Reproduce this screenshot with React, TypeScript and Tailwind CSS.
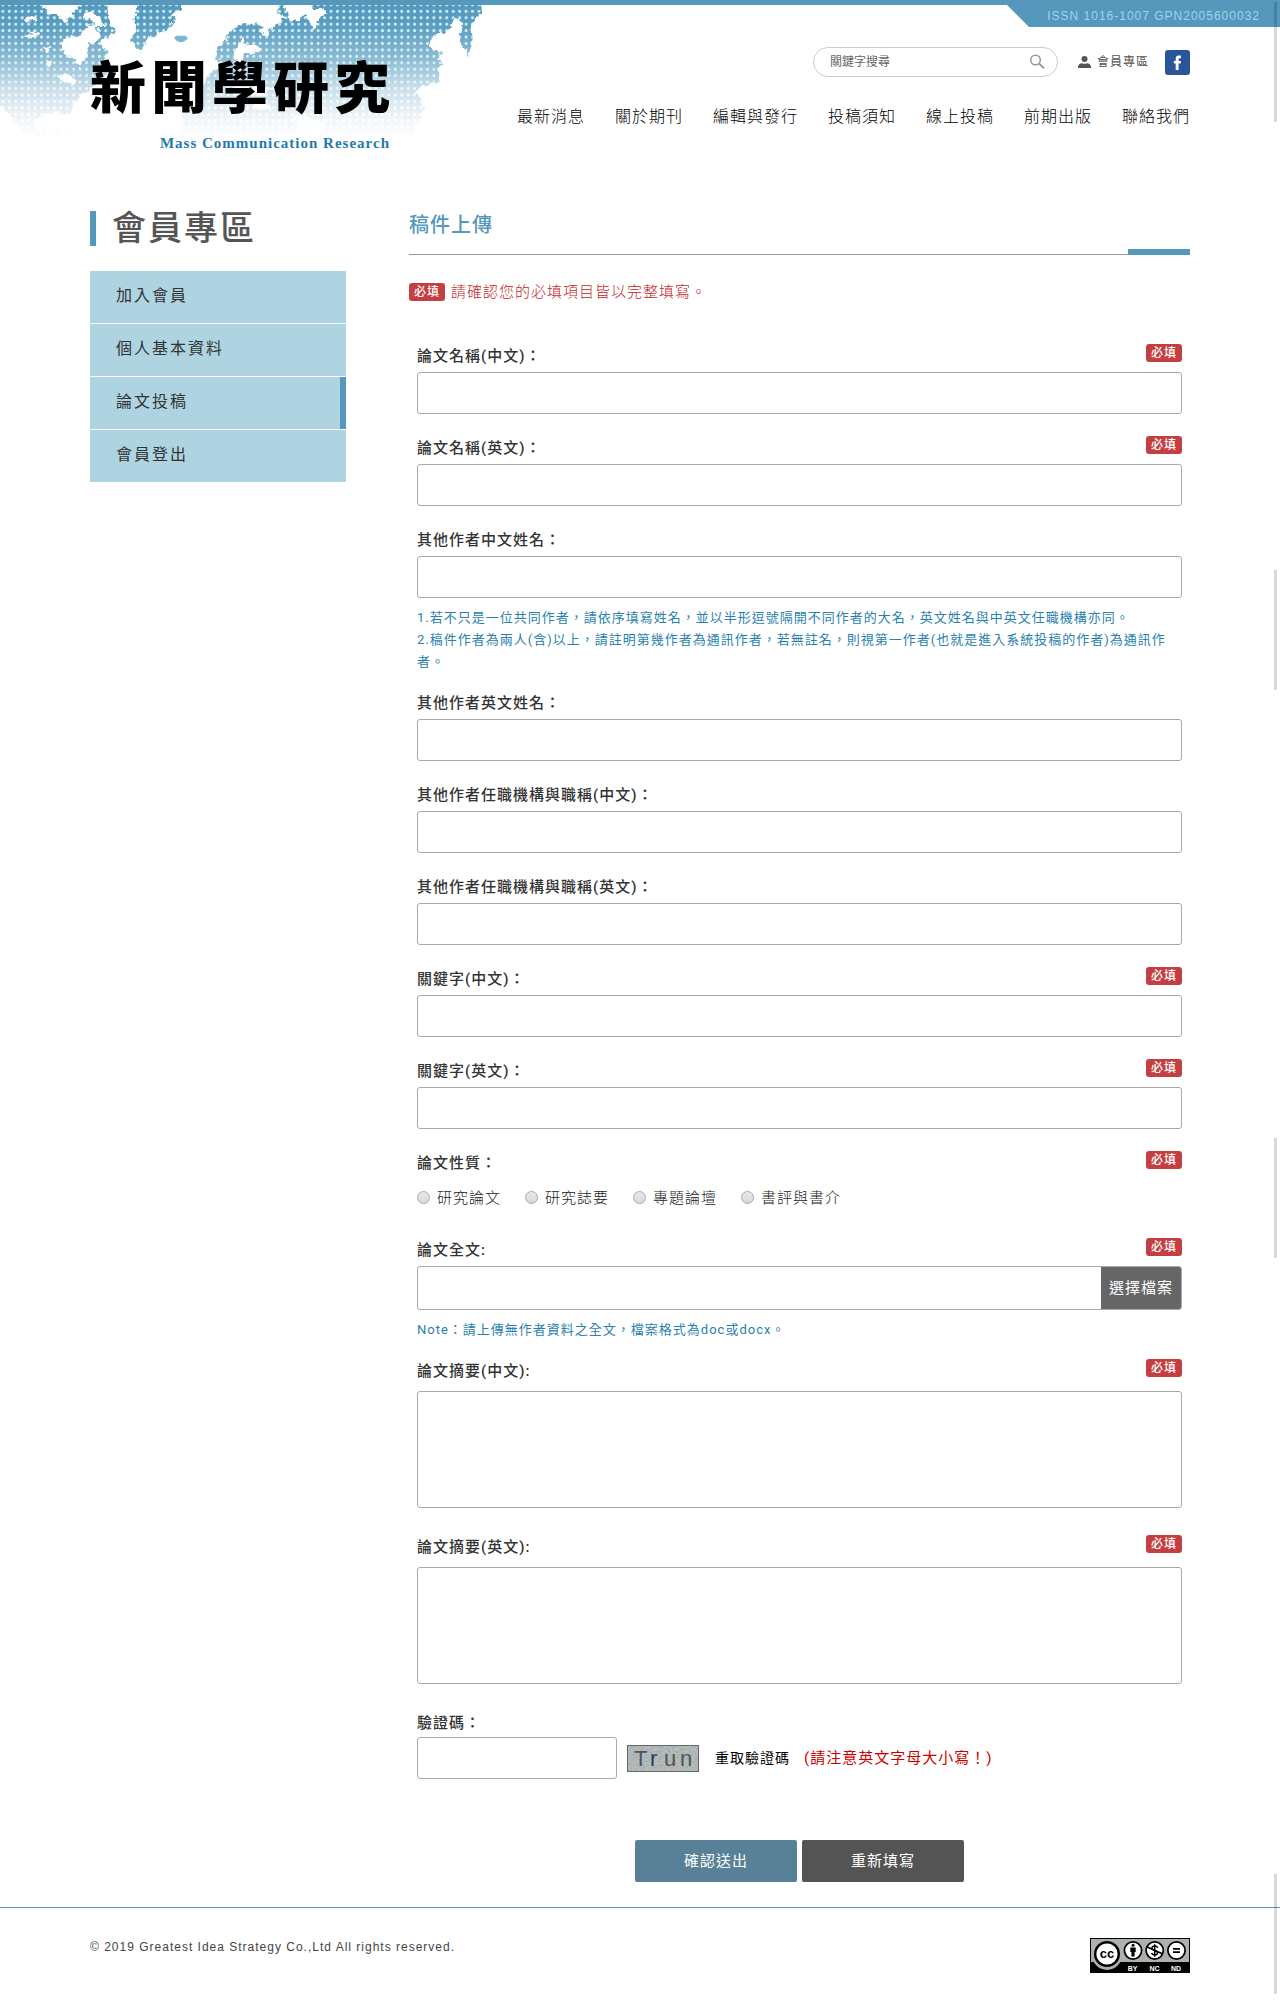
import type { ReactNode } from 'react'

const navItems = ['最新消息', '關於期刊', '編輯與發行', '投稿須知', '線上投稿', '前期出版', '聯絡我們']

const menuItems = [
  { label: '加入會員' },
  { label: '個人基本資料' },
  { label: '論文投稿', active: true },
  { label: '會員登出' },
]

const paperTypes = ['研究論文', '研究誌要', '專題論壇', '書評與書介']

const inputClass = 'block w-full h-[42px] px-3 border border-[#aaa] rounded-[3px] bg-white'

function WorldMap() {
  return (
    <svg className="absolute left-0 top-0 w-[500px] h-[170px]" viewBox="0 0 1500 510" aria-hidden>
      <defs>
        <linearGradient id="sea" x1="0" y1="0" x2="0" y2="1">
          <stop offset="0" stopColor="#5598bc" />
          <stop offset="0.18" stopColor="#5b9cbf" />
          <stop offset="0.42" stopColor="#8ebbd3" />
          <stop offset="0.62" stopColor="#c8dde9" />
          <stop offset="0.85" stopColor="#f0f6f9" />
          <stop offset="1" stopColor="#ffffff" />
        </linearGradient>
        <linearGradient id="fade" x1="0" y1="0" x2="0" y2="1">
          <stop offset="0" stopColor="#c4f1f5" />
          <stop offset="0.5" stopColor="#d6f3f7" />
          <stop offset="0.8" stopColor="#ffffff" />
        </linearGradient>
        <pattern id="dotMask" width="19.3" height="19.3" patternUnits="userSpaceOnUse" x="-1" y="5">
          <circle cx="9.6" cy="9.6" r="4.6" fill="#fff" />
        </pattern>
        <mask id="dots">
          <rect width="1500" height="420" fill="url(#dotMask)" />
        </mask>
        <filter id="coast" x="-5%" y="-5%" width="110%" height="110%" colorInterpolationFilters="sRGB">
          <feTurbulence type="fractalNoise" baseFrequency="0.05" numOctaves="3" seed="4" />
          <feDisplacementMap in="SourceGraphic" scale="28" xChannelSelector="R" yChannelSelector="G" />
        </filter>
      </defs>
      <rect width="1446" height="420" fill="url(#sea)" />
      <rect width="1446" height="420" fill="url(#fade)" mask="url(#dots)" />
      <g fill="#fff" filter="url(#coast)">
        <path d="M320 -20H410L408 40 400 60 408 90 396 110 400 135 425 152 440 120 470 100 500 92 525 60 505 50 545 25 540 -20H838L835 45 858 55 820 80 800 105 775 92 785 75 745 65 715 75 690 95 680 120 655 140 650 165 665 190 620 230 600 300 545 350 540 430H230L200 350 230 300 290 250 330 215 310 190 325 150 300 125 345 100 325 60Z" />
        <path d="M185 125 215 100 240 112 250 85 285 70 300 95 290 120 268 130 260 165 240 205 225 175 200 165 182 145Z" />
        <path d="M110 -10H245L238 35 212 32 225 52 190 62 170 42 150 50 138 32Z" />
        <path d="M262 30 300 50 318 85 290 75 270 62 250 60 255 45Z" />
        <path d="M845-20H925L945 35 972 18 982 40 955 50 945 95 930 65 915 40 895 68 865 55Z" />
        <path d="M712 132 735 112 730 140 765 130 785 150 760 162 732 158 722 195 700 178Z" />
        <path d="M1480 -20V420H1235L1275 300 1240 270 1316 245 1322 155 1285 145 1295 118 1320 98 1350 92 1355 68 1375 50 1385 82 1378 110 1385 140 1407 168 1418 120 1410 90 1422 65 1448 35V-20Z" />
        <path d="M70 55 105 46 110 58 80 66ZM78 102 120 92 115 104 85 112ZM135 145 150 140 148 158 138 158ZM138 180 152 176 150 200 140 200Z" />
        <path d="M168 225 200 222 230 240 215 262 190 240ZM105 350 150 338 240 345 240 400 110 390ZM0 315 70 395 0 430Z" />
        <path d="M700 260 830 262 780 290 700 280ZM770 300 812 310 808 332 760 325ZM880 345 930 355 980 375 960 410 900 400Z" />
      </g>
      <path d="M522 112Q532 104 540 108Q556 104 564 114Q556 126 542 127Q528 126 522 112Z" fill="#7fb6d0" />
      <path d="M1338 215 1366 225 1364 270 1352 300 1316 318 1330 285 1350 255Z" fill="#fff" opacity="0.7" />
    </svg>
  )
}

function CcBadge() {
  return (
    <svg className="w-[100px] h-[35px]" viewBox="0 0 100 35" role="img" aria-label="Creative Commons BY-NC-ND">
      <rect width="100" height="35" fill="#000" />
      <rect x="1" y="1" width="98" height="23" fill="#aab2ab" />
      <circle cx="17" cy="17" r="15" fill="#aab2ab" />
      <circle cx="17" cy="16" r="11.8" fill="#fff" stroke="#000" strokeWidth="2.4" />
      <text x="17" y="20" textAnchor="middle" fontSize="13" fontWeight="700" letterSpacing="0" fontFamily="Liberation Sans, sans-serif">cc</text>
      <g fill="#fff" stroke="#000" strokeWidth="1.7">
        <circle cx="43" cy="12.5" r="8.6" />
        <circle cx="64.7" cy="12.5" r="8.6" />
        <circle cx="86.5" cy="12.5" r="8.6" />
      </g>
      <circle cx="43" cy="7.3" r="1.5" />
      <path d="M40.3 9.4H45.7V14H44.6V18.6H41.4V14H40.3Z" />
      <path d="M67.8 9.7Q67 8 64.7 8Q62 8 62 10.1Q62 11.9 64.7 12.4Q67.5 13 67.5 15Q67.5 17 64.7 17Q62.2 17 61.5 15.1M64.7 6.3V18.7" fill="none" stroke="#000" strokeWidth="1.5" />
      <path d="M57.2 9 72.4 15.7" stroke="#000" strokeWidth="1.5" />
      <path d="M83 10.8H90M83 14.2H90" stroke="#000" strokeWidth="1.8" />
      <g fill="#fff" fontSize="7" fontWeight="700" letterSpacing="0" textAnchor="middle" fontFamily="Liberation Sans, sans-serif">
        <text x="42.5" y="32.5">BY</text>
        <text x="64.5" y="32.5">NC</text>
        <text x="86" y="32.5">ND</text>
      </g>
    </svg>
  )
}

function Required() {
  return (
    <span className="inline-flex items-center justify-center shrink-0 w-9 h-[18px] rounded-[3px] bg-[#c43f42] text-white text-xs font-medium leading-[18px]">
      必填
    </span>
  )
}

type FieldProps = {
  id: string
  label: string
  required?: boolean
  className?: string
  headClass?: string
  children: ReactNode
}

function Field({ id, label, required, className = 'pb-[18px]', headClass = 'h-8', children }: FieldProps) {
  return (
    <div className={className}>
      <div className={`flex items-start justify-between ${headClass}`}>
        <label htmlFor={id} className="text-[15px] leading-8 font-medium text-[#333]">{label}</label>
        {required && <div className="flex pt-1"><Required /></div>}
      </div>
      {children}
    </div>
  )
}

function TextField({ id, label, required }: { id: string; label: string; required?: boolean }) {
  return (
    <Field id={id} label={label} required={required}>
      <input id={id} type="text" className={inputClass} />
    </Field>
  )
}

function Header() {
  return (
    <header className="relative h-[170px] border-t-[5px] border-[#5598bc]">
      <div className="absolute inset-x-0 -top-[5px] h-[170px] overflow-hidden">
        <WorldMap />
        <div className="absolute inset-x-0 top-0 h-[5px] bg-[#5598bc]" />
      </div>
      <div className="absolute right-0 -top-[5px] w-[273px] h-[27px] pr-5 bg-[#5598bc] text-right font-['Liberation_Sans',sans-serif] text-xs leading-8 text-[#9ed3e8] [clip-path:polygon(0_5px,22px_100%,100%_100%,100%_0,0_0)]">
        ISSN 1016-1007 GPN2005600032
      </div>

      <div className="relative max-w-[1100px] mx-auto flex justify-between">
        <a href="#" className="flex flex-col w-[300px] pt-10">
          <span className="flex justify-between h-[88px] text-[56px] leading-[88px] font-black text-black tracking-normal">
            <span>新</span>
            <span>聞</span>
            <span>學</span>
            <span>研</span>
            <span>究</span>
          </span>
          <span className="self-end font-['Liberation_Serif',serif] text-[15px] leading-5 font-bold text-[#1f7aad]">
            Mass Communication Research
          </span>
        </a>

        <div className="flex flex-col items-end pt-[42px]">
          <div className="flex items-center">
            <form className="flex items-center w-[245px] h-[30px] pl-4 pr-3 border border-[#ccc] rounded-full bg-white">
              <input
                type="search"
                aria-label="關鍵字搜尋"
                placeholder="關鍵字搜尋"
                className="flex-1 min-w-0 text-xs tracking-normal bg-transparent outline-none placeholder:text-[#666]"
              />
              <button type="button" aria-label="搜尋">
                <svg width="16" height="16" viewBox="0 0 16 16" fill="none" stroke="#999">
                  <circle cx="6.5" cy="6" r="4.8" strokeWidth="1.5" />
                  <path d="M10.2 9.6 15 14.4" strokeWidth="2" />
                </svg>
              </button>
            </form>
            <a href="#" className="flex items-center gap-1.5 ml-5 text-xs text-[#555]">
              <svg width="13" height="12" viewBox="0 0 13 12" fill="#555" aria-hidden>
                <circle cx="6.5" cy="3" r="3" />
                <path d="M0 12V10.5Q0.5 7.5 4 7.2Q6.5 8.4 9 7.2Q12.5 7.5 13 10.5V12Z" />
              </svg>
              會員專區
            </a>
            <a href="#" aria-label="Facebook" className="ml-4">
              <svg width="25" height="25" viewBox="0 0 25 25">
                <rect width="25" height="25" rx="3" fill="#2a5699" />
                <path d="M16 5.5V8.3H14.3Q13.6 8.3 13.6 9.2V11H16L15.7 13.6H13.6V20H10.7V13.6H8.9V11H10.7V8.9Q10.7 5.5 13.8 5.5Z" fill="#fff" />
              </svg>
            </a>
          </div>
          <nav className="flex gap-[30px] mt-7 text-base leading-6 font-light text-black">
            {navItems.map((item) => (
              <a key={item} href="#">{item}</a>
            ))}
          </nav>
        </div>
      </div>
    </header>
  )
}

function Sidebar() {
  return (
    <aside className="w-64 shrink-0">
      <h1 className="mt-[41px] h-[35px] pl-4 border-l-[6px] border-[#5598bc] text-[34px] leading-[34px] font-medium text-[#555] tracking-[2px]">
        會員專區
      </h1>
      <ul className="mt-[25px] flex flex-col gap-px text-base tracking-[2px] text-[#333]">
        {menuItems.map((item) => (
          <li key={item.label}>
            <a
              href="#"
              className={`block h-[52px] pl-[26px] leading-[50px] bg-[#aed3e1] ${item.active ? 'border-r-[6px] border-[#5598bc]' : ''}`}
            >
              {item.label}
            </a>
          </li>
        ))}
      </ul>
    </aside>
  )
}

function UploadForm() {
  return (
    <form className="px-2 pt-9">
      <TextField id="title-zh" label="論文名稱(中文)：" required />
      <TextField id="title-en" label="論文名稱(英文)：" required />
      <Field id="authors-zh" label="其他作者中文姓名：" className="pb-[14px]">
        <input id="authors-zh" type="text" className={inputClass} />
        <p className="mt-[9px] text-[13px] leading-[22px] text-[#2a7fae]">
          1.若不只是一位共同作者，請依序填寫姓名，並以半形逗號隔開不同作者的大名，英文姓名與中英文任職機構亦同。
          <br />
          2.稿件作者為兩人(含)以上，請註明第幾作者為通訊作者，若無註名，則視第一作者(也就是進入系統投稿的作者)為通訊作者。
        </p>
      </Field>
      <TextField id="authors-en" label="其他作者英文姓名：" />
      <TextField id="org-zh" label="其他作者任職機構與職稱(中文)：" />
      <TextField id="org-en" label="其他作者任職機構與職稱(英文)：" />
      <TextField id="keywords-zh" label="關鍵字(中文)：" required />
      <TextField id="keywords-en" label="關鍵字(英文)：" required />

      <Field id="type-0" label="論文性質：" required>
        <div className="flex gap-6 h-[37px] text-[15px] leading-9 font-light text-[#222]">
          {paperTypes.map((type, i) => (
            <label key={type} className="flex items-center gap-[7px]">
              <input
                id={`type-${i}`}
                type="radio"
                name="type"
                className="appearance-none size-[13px] border border-[#aaa] rounded-full bg-linear-to-b from-[#e8e8e8] to-[#d8d8d8]"
              />
              {type}
            </label>
          ))}
        </div>
      </Field>

      <Field id="paper" label="論文全文:" required className="pb-[14px]">
        <div className="flex h-11 border border-[#aaa] rounded-[3px] overflow-hidden">
          <input id="paper" type="text" className="flex-1 min-w-0 px-3" />
          <button type="button" className="w-20 bg-[#666] text-white text-[15px]">選擇檔案</button>
        </div>
        <p className="mt-[9px] text-[13px] leading-[22px] text-[#2a7fae]">
          Note：請上傳無作者資料之全文，檔案格式為doc或docx。
        </p>
      </Field>

      <Field id="abstract-zh" label="論文摘要(中文):" required className="pb-[23px]" headClass="h-9">
        <textarea id="abstract-zh" className="block w-full h-[117px] p-3 border border-[#aaa] rounded-[3px] resize-none" />
      </Field>
      <Field id="abstract-en" label="論文摘要(英文):" required className="pb-[23px]" headClass="h-9">
        <textarea id="abstract-en" className="block w-full h-[117px] p-3 border border-[#aaa] rounded-[3px] resize-none" />
      </Field>

      <Field id="captcha" label="驗證碼：" className="" headClass="h-[30px]">
        <div className="flex items-center">
          <input id="captcha" type="text" className="w-[200px] h-[42px] px-3 border border-[#aaa] rounded-[3px]" />
          <svg className="ml-2.5 w-[72px] h-[27px]" viewBox="0 0 72 27" role="img" aria-label="驗證碼圖片">
            <filter id="grain" colorInterpolationFilters="sRGB">
              <feTurbulence type="fractalNoise" baseFrequency="0.5" numOctaves="2" />
              <feColorMatrix values="0.3 0 0 0 0.53  0 0.3 0 0 0.57  0 0 0.3 0 0.57  0 0 0 0 1" />
            </filter>
            <rect width="72" height="27" filter="url(#grain)" />
            <rect x="0.5" y="0.5" width="71" height="26" fill="none" stroke="#666" />
            <g fontSize="22" letterSpacing="0" fontFamily="Liberation Sans, sans-serif" fill="#555">
              <text x="7" y="21">T</text>
              <text x="23" y="21" fill="#23405a">r</text>
              <text x="37" y="21" fill="#5d5040">u</text>
              <text x="53" y="21">n</text>
            </g>
          </svg>
          <a href="#" className="ml-4 text-sm text-black">重取驗證碼</a>
          <span className="ml-3.5 text-[15px] text-[#c00]">(請注意英文字母大小寫！)</span>
        </div>
      </Field>

      <div className="flex justify-center gap-[5px] mt-[61px] text-[15px] text-white">
        <button type="submit" className="w-[162px] h-[42px] rounded-xs bg-[#588197]">確認送出</button>
        <button type="reset" className="w-[162px] h-[42px] rounded-xs bg-[#545454]">重新填寫</button>
      </div>
    </form>
  )
}

export default function App() {
  return (
    <div className="relative bg-white font-[Roboto,'Noto_Sans_CJK_TC',sans-serif] tracking-[1px]">
      <Header />

      <div className="max-w-[1100px] mx-auto flex gap-[63px]">
        <Sidebar />
        <main className="flex-1 min-w-0">
          <div className="flex items-end justify-between h-[85px] border-b border-[#999]">
            <h2 className="pb-[15px] text-xl leading-7 font-medium text-[#5598bc]">稿件上傳</h2>
            <span className="w-[62px] h-1.5 -mb-px bg-[#5598bc]" />
          </div>
          <p className="flex items-center gap-1.5 mt-[25px] h-6 text-[15px] leading-6 font-light text-[#c0282b]">
            <Required />
            請確認您的必填項目皆以完整填寫。
          </p>
          <UploadForm />
        </main>
      </div>

      <footer className="mt-[25px] border-t border-[#5598bc]">
        <div className="max-w-[1100px] mx-auto flex items-start justify-between pt-[30px] pb-[30px]">
          <p className="font-['Liberation_Sans',sans-serif] text-xs leading-[18px] text-[#444]">
            © 2019 Greatest Idea Strategy Co.,Ltd All rights reserved.
          </p>
          <a href="#"><CcBadge /></a>
        </div>
      </footer>

      {/* grey strips along the right edge */}
      <div className="absolute right-[3px] top-[2px] w-[3px] h-[120px] bg-black/15" />
      <div className="absolute right-[3px] top-[570px] w-[3px] h-[120px] bg-black/15" />
      <div className="absolute right-[3px] top-[1138px] w-[3px] h-[120px] bg-black/15" />
      <div className="absolute right-[3px] top-[1874px] w-[3px] h-[120px] bg-black/15" />
    </div>
  )
}
